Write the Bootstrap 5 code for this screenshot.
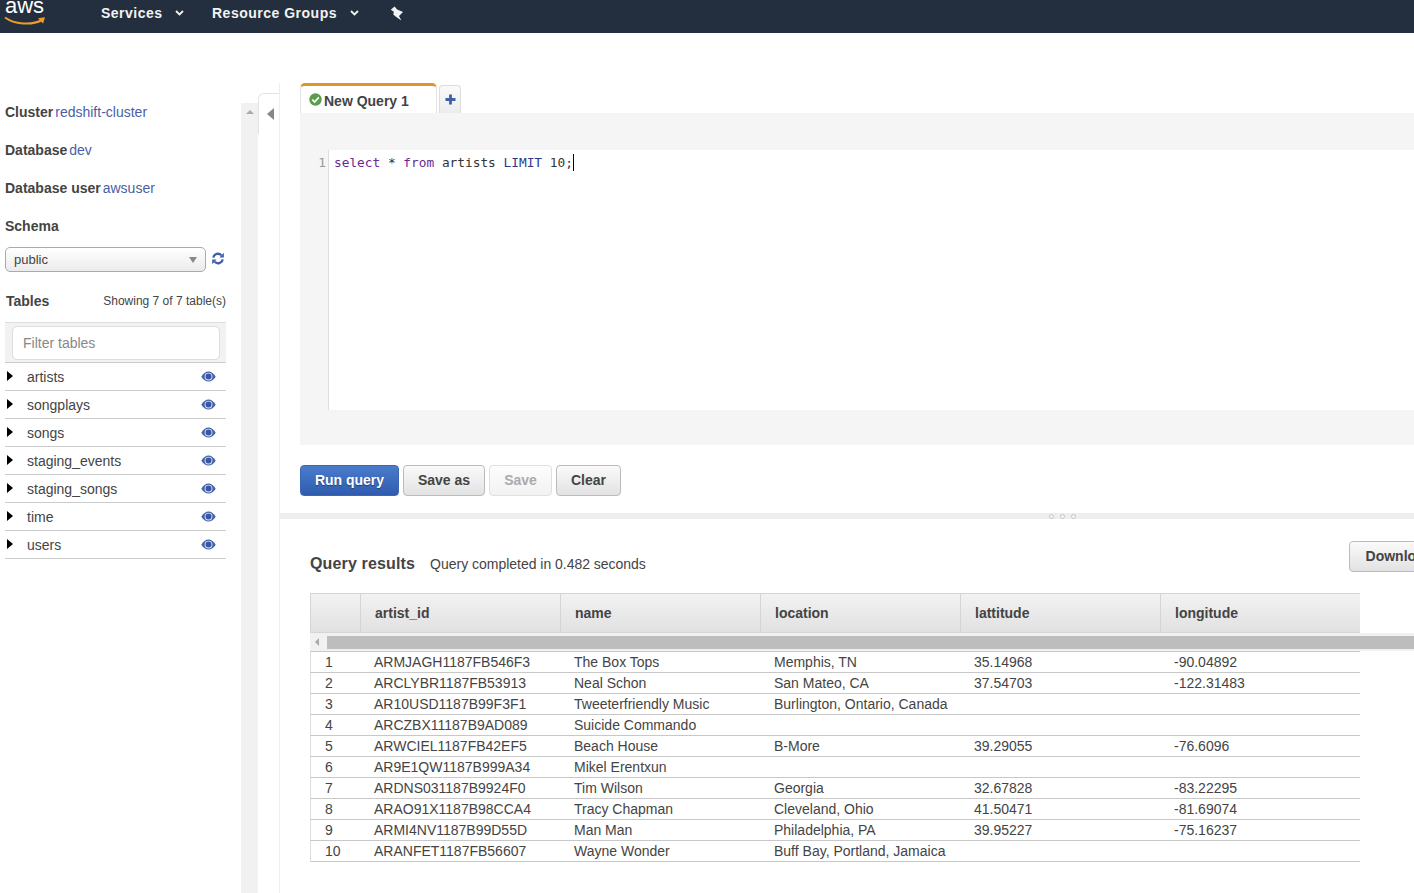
<!DOCTYPE html>
<html lang="en">
<head>
<meta charset="utf-8">
<title>Redshift Query Editor</title>
<link href="https://cdn.jsdelivr.net/npm/bootstrap@5.3.0/dist/css/bootstrap.min.css" rel="stylesheet">
<style>
html,body{height:100%;overflow:hidden}
body{font-family:"Liberation Sans",Arial,sans-serif;font-size:14px;color:#444;background:#fff}
.topbar{height:33px;background:#232f3e;color:#fff;padding:0;flex-wrap:nowrap;justify-content:flex-start;overflow:hidden}
.logo-box{width:101px;height:33px;position:relative;flex:none}
.logo-word{font-size:22px;line-height:22px;color:#fff;position:absolute;left:5px;top:-5px}
.logo-smile{position:absolute;left:4px;top:15px}
.top-item{font-weight:700;font-size:14px;letter-spacing:.5px;color:#f2f3f3;margin-top:-7px;display:flex;align-items:center}
.top-item svg{margin-left:13px}
.top-services{width:111px}
.top-services svg{margin-left:12px}
.top-groups{width:178px}
.top-item .pin-icon{margin:1px 0 0 0}
.shell{height:860px}
.side{width:241px;flex:none;padding:60px 15px 0 5px;position:relative}
.side-row{height:38px;line-height:38px;white-space:nowrap}
.side-row b{font-weight:700}
.side-link{color:#4a5fa5;text-decoration:none;margin-left:2px}
.schema-row{height:25px;margin-top:2px;width:221px}
.schema-select{width:201px;height:25px;border:1px solid #aaa;border-radius:5px;background:linear-gradient(#fff,#ebebeb);padding:0 8px;font-size:13px;color:#444;display:flex;align-items:center;justify-content:space-between;line-height:1}
.caret-down{width:0;height:0;border-left:4px solid transparent;border-right:4px solid transparent;border-top:6px solid #888}
.refresh{margin:-3px 2px 0 0}
.tables-head{height:38px;margin-top:10px;width:221px;line-height:38px}
.tables-head b{margin-left:1px}
.tables-head span{font-size:12px}
.filter-box{background:#f2f2f2;border-top:1px solid #ddd;border-bottom:1px solid #ccc;padding:3px 6px 2px 7px;width:221px;height:41px;margin-top:2px}
.filter-input.form-control{height:34px;border:1px solid #ddd;border-radius:5px;padding:0 10px;font-size:14px;color:#444;box-shadow:none}
.filter-input.form-control::placeholder{color:#888;opacity:1}
.tbl-list{width:221px;border-radius:0}
.tbl-item.list-group-item{height:28px;padding:1px 10px 0 2px;border:0;border-bottom:1px solid #ccc;color:#444;font-size:14px;display:flex;align-items:center;background:transparent}
.tri{width:0;height:0;border-top:5.5px solid transparent;border-bottom:5.5px solid transparent;border-left:6px solid #000;margin-right:14px;margin-top:-2px}
.eye{margin-top:-1px}
.scroll-track{width:17px;flex:none;background:#f1f1f1;margin-top:70px;position:relative}
.scroll-up{position:absolute;left:5px;top:7px;width:0;height:0;border-left:4px solid transparent;border-right:4px solid transparent;border-bottom:4px solid #aaa}
.toggler{width:22px;flex:none;border-right:1px solid #eee;margin-top:50px;padding-top:10px}
.toggle-tab{height:41px;border:1px solid #e3e3e3;border-right:0;border-bottom:0;border-top-left-radius:6px;display:flex;align-items:center;justify-content:center;padding-left:2px}
.toggle-tri{width:0;height:0;border-top:6px solid transparent;border-bottom:6px solid transparent;border-right:7px solid #888}
.main-col{flex:1 1 0;min-width:0;overflow:hidden}
.query-pane{padding:50px 0 0 20px;height:480px}
.tab-row{height:30px;align-items:flex-end}
.q-tab{width:137px;height:30px;border:1px solid #e3e3e3;border-top:3px solid #e0962b;border-bottom:0;border-radius:5px 5px 0 0;font-weight:700;display:flex;align-items:center;padding:3px 0 0 8px;color:#444;background:#fff}
.q-tab svg{margin:-3px 2px 0 0}
.q-add{width:22px;height:28px;margin-left:2px;border:1px solid #ddd;border-bottom:0;border-radius:4px 4px 0 0;background:linear-gradient(#fafafa,#ececec);display:flex;align-items:center;justify-content:center}
.editor-wrap{background:#f5f5f5;height:332px;padding:37px 0 35px}
.editor{display:flex;height:260px;background:#fff;margin-left:0}
.gutter{width:29px;background:#f5f5f5;border-right:1px solid #ddd;font-family:"DejaVu Sans Mono",monospace;font-size:12.8px;line-height:25px;color:#999;text-align:right;padding-right:2px;flex:none}
.code{font-family:"DejaVu Sans Mono",monospace;font-size:12.8px;line-height:25px;color:#333;padding-left:5px;white-space:pre}
.kw{color:#6b2a8f}
.kw2{color:#2b3a8f}
.cursor{display:inline-block;width:1px;height:17px;background:#000;vertical-align:-4px}
.actions{margin-top:20px;gap:4px}
.aws-btn.btn{height:31px;padding:0;border-radius:4px;font-size:14px;font-weight:700;color:#444;border:1px solid #bbb;background:linear-gradient(#fafafa,#e2e2e2);display:flex;align-items:center;justify-content:center}
.btn-run.btn{width:99px;color:#fff;border-color:#3a66b5;background:linear-gradient(#4a7ccc,#2f5cae);text-shadow:0 1px 1px rgba(0,0,0,.4)}
.btn-saveas.btn{width:82px}
.btn-save.btn{width:63px;opacity:1;color:#aaa;border-color:#e0e0e0;background:linear-gradient(#fdfdfd,#f2f2f2)}
.btn-clear.btn{width:65px}
.splitter{height:6px;background:#eee;display:flex;justify-content:flex-start;gap:6px;padding-left:769px}
.dot{width:5px;height:5px;border:1px solid #c4c4c4;border-radius:50%;margin-top:1px;background:#f6f6f6}
.results{padding:0 0 0 30px;width:1169px}
.res-head{height:74px;padding-top:22px}
.res-title{font-size:16px;font-weight:700;letter-spacing:.15px;margin-right:15px;line-height:46px}
.res-msg{font-size:14px;letter-spacing:-.02px}
.btn-dl.btn{width:100px;height:31px;flex:none}
.hdr-table.table,.data-table.table{table-layout:fixed;width:1050px;margin:0;color:#444;font-size:14px;border-collapse:separate;border-spacing:0}
.hdr-table.table>thead>tr>th{height:40px;padding:0 0 0 14px;vertical-align:middle;background:linear-gradient(#f2f2f2,#e1e1e1);border:0;border-top:1px solid #d5d5d5;border-bottom:1px solid #d5d5d5;border-left:1px solid #d5d5d5;font-weight:700;color:#444;box-shadow:none}
.h-scroll{width:1104px;height:18px;background:#f1f1f1;position:relative;display:flex;align-items:center;padding-left:17px}
.h-thumb{flex:1;height:13px;background:#bdbdbd}
.h-arrow{position:absolute;left:5px;top:5px;width:0;height:0;border-top:4px solid transparent;border-bottom:4px solid transparent;border-right:4px solid #aaa}
.data-table.table>tbody>tr>td{height:21px;padding:0 0 0 14px;line-height:20px;border:0;border-bottom:1px solid #c8c8c8;white-space:nowrap;overflow:visible;color:#444;box-shadow:none;background:transparent}
.data-table.table>tbody>tr>td:first-child{border-left:1px solid #ddd}
.data-table.table>tbody>tr:first-child>td{border-top:1px solid #c8c8c8;height:22px}
</style>
</head>
<body>
<nav class="navbar topbar d-flex align-items-center">
  <div class="logo-box">
    <span class="logo-word">aws</span>
    <svg class="logo-smile" width="43" height="12" viewBox="0 0 43 12"><path d="M1 2.500C10 9 27 11 38 5" fill="none" stroke="#ec9c2b" stroke-width="2"/><path d="M34 3.200 41 2.200 39 8.500Z" fill="#ec9c2b"/></svg>
  </div>
  <div class="top-item top-services">Services<svg width="9" height="6" viewBox="0 0 9 6"><path d="M1 1 4.500 4.500 8 1" fill="none" stroke="#f2f3f3" stroke-width="1.800"/></svg></div>
  <div class="top-item top-groups">Resource Groups<svg width="9" height="6" viewBox="0 0 9 6"><path d="M1 1 4.500 4.500 8 1" fill="none" stroke="#f2f3f3" stroke-width="1.800"/></svg></div>
  <div class="top-item"><svg class="pin-icon" width="14" height="15" viewBox="0 0 14 15"><path d="M.8 3.800 4.500.5 7.200 3.400 13 6 9 10 11.300 14.600 6 10.800 3.300 8.500 3.800 5.800Z" fill="#f2f3f3"/></svg></div>
</nav>

<div class="d-flex shell">
  <aside class="side">
    <div class="side-row"><b>Cluster</b><a class="side-link" href="#">redshift-cluster</a></div>
    <div class="side-row"><b>Database</b><a class="side-link" href="#">dev</a></div>
    <div class="side-row"><b>Database user</b><a class="side-link" href="#">awsuser</a></div>
    <div class="side-row"><b>Schema</b></div>
    <div class="schema-row d-flex align-items-center justify-content-between">
      <div class="schema-select"><span>public</span><i class="caret-down"></i></div>
      <svg class="refresh" width="12" height="13" viewBox="0 0 12 13"><path d="M1.300 5.600A4.700 4.700 0 0 1 9.300 3.200" fill="none" stroke="#3f5fa8" stroke-width="2.300"/><path d="M7.400 5.400 11.800 5.400 11.800 .8Z" fill="#3f5fa8"/><path d="M10.700 7.400A4.700 4.700 0 0 1 2.700 9.800" fill="none" stroke="#3f5fa8" stroke-width="2.300"/><path d="M4.600 7.600.2 7.600.2 12.200Z" fill="#3f5fa8"/></svg>
    </div>
    <div class="tables-head d-flex justify-content-between"><b>Tables</b><span>Showing 7 of 7 table(s)</span></div>
    <div class="filter-box"><input class="form-control filter-input" placeholder="Filter tables"></div>
    <ul class="list-group tbl-list">
      <li class="list-group-item tbl-item"><i class="tri"></i><span class="flex-grow-1">artists</span><svg class="eye" width="15" height="11" viewBox="0 0 15 11"><path d="M.3 5.800C2.200 2.500 4.700 .5 7.500 .5S12.800 2.500 14.700 5.800C12.800 8.800 10.300 10.500 7.500 10.500S2.200 8.800 .3 5.800Z" fill="#4463ad"/><circle cx="7.500" cy="5.600" r="3.900" fill="#dfe5f3"/><circle cx="7.500" cy="5.600" r="3" fill="#3a57a0"/></svg></li>
      <li class="list-group-item tbl-item"><i class="tri"></i><span class="flex-grow-1">songplays</span><svg class="eye" width="15" height="11" viewBox="0 0 15 11"><path d="M.3 5.800C2.200 2.500 4.700 .5 7.500 .5S12.800 2.500 14.700 5.800C12.800 8.800 10.300 10.500 7.500 10.500S2.200 8.800 .3 5.800Z" fill="#4463ad"/><circle cx="7.500" cy="5.600" r="3.900" fill="#dfe5f3"/><circle cx="7.500" cy="5.600" r="3" fill="#3a57a0"/></svg></li>
      <li class="list-group-item tbl-item"><i class="tri"></i><span class="flex-grow-1">songs</span><svg class="eye" width="15" height="11" viewBox="0 0 15 11"><path d="M.3 5.800C2.200 2.500 4.700 .5 7.500 .5S12.800 2.500 14.700 5.800C12.800 8.800 10.300 10.500 7.500 10.500S2.200 8.800 .3 5.800Z" fill="#4463ad"/><circle cx="7.500" cy="5.600" r="3.900" fill="#dfe5f3"/><circle cx="7.500" cy="5.600" r="3" fill="#3a57a0"/></svg></li>
      <li class="list-group-item tbl-item"><i class="tri"></i><span class="flex-grow-1">staging_events</span><svg class="eye" width="15" height="11" viewBox="0 0 15 11"><path d="M.3 5.800C2.200 2.500 4.700 .5 7.500 .5S12.800 2.500 14.700 5.800C12.800 8.800 10.300 10.500 7.500 10.500S2.200 8.800 .3 5.800Z" fill="#4463ad"/><circle cx="7.500" cy="5.600" r="3.900" fill="#dfe5f3"/><circle cx="7.500" cy="5.600" r="3" fill="#3a57a0"/></svg></li>
      <li class="list-group-item tbl-item"><i class="tri"></i><span class="flex-grow-1">staging_songs</span><svg class="eye" width="15" height="11" viewBox="0 0 15 11"><path d="M.3 5.800C2.200 2.500 4.700 .5 7.500 .5S12.800 2.500 14.700 5.800C12.800 8.800 10.300 10.500 7.500 10.500S2.200 8.800 .3 5.800Z" fill="#4463ad"/><circle cx="7.500" cy="5.600" r="3.900" fill="#dfe5f3"/><circle cx="7.500" cy="5.600" r="3" fill="#3a57a0"/></svg></li>
      <li class="list-group-item tbl-item"><i class="tri"></i><span class="flex-grow-1">time</span><svg class="eye" width="15" height="11" viewBox="0 0 15 11"><path d="M.3 5.800C2.200 2.500 4.700 .5 7.500 .5S12.800 2.500 14.700 5.800C12.800 8.800 10.300 10.500 7.500 10.500S2.200 8.800 .3 5.800Z" fill="#4463ad"/><circle cx="7.500" cy="5.600" r="3.900" fill="#dfe5f3"/><circle cx="7.500" cy="5.600" r="3" fill="#3a57a0"/></svg></li>
      <li class="list-group-item tbl-item"><i class="tri"></i><span class="flex-grow-1">users</span><svg class="eye" width="15" height="11" viewBox="0 0 15 11"><path d="M.3 5.800C2.200 2.500 4.700 .5 7.500 .5S12.800 2.500 14.700 5.800C12.800 8.800 10.300 10.500 7.500 10.500S2.200 8.800 .3 5.800Z" fill="#4463ad"/><circle cx="7.500" cy="5.600" r="3.900" fill="#dfe5f3"/><circle cx="7.500" cy="5.600" r="3" fill="#3a57a0"/></svg></li>
    </ul>
  </aside>
  <div class="scroll-track"><i class="scroll-up"></i></div>
  <div class="toggler"><div class="toggle-tab"><i class="toggle-tri"></i></div></div>

  <main class="main-col">
    <section class="query-pane">
      <div class="d-flex tab-row">
        <div class="q-tab"><svg width="13" height="13" viewBox="0 0 13 13"><circle cx="6.500" cy="6.500" r="6.200" fill="#5a9e4b"/><path d="M3.300 6.700 5.600 9 9.800 4.400" fill="none" stroke="#fff" stroke-width="1.800"/></svg>New Query 1</div>
        <div class="q-add"><svg width="11" height="11" viewBox="0 0 11 11"><path d="M5.500.5v10M.5 5.500h10" stroke="#3f5fa8" stroke-width="2.800"/></svg></div>
      </div>
      <div class="editor-wrap">
        <div class="editor">
          <div class="gutter">1</div>
          <div class="code"><span class="kw">select</span> * <span class="kw">from</span> artists <span class="kw2">LIMIT</span> 10;<span class="cursor"></span></div>
        </div>
      </div>
      <div class="d-flex actions">
        <button class="btn aws-btn btn-run" type="button">Run query</button>
        <button class="btn aws-btn btn-saveas" type="button">Save as</button>
        <button class="btn aws-btn btn-save" type="button" disabled>Save</button>
        <button class="btn aws-btn btn-clear" type="button">Clear</button>
      </div>
    </section>
    <div class="splitter"><i class="dot"></i><i class="dot"></i><i class="dot"></i></div>
    <section class="results">
      <div class="d-flex justify-content-between res-head">
        <div><span class="res-title">Query results</span><span class="res-msg">Query completed in 0.482 seconds</span></div>
        <button class="btn aws-btn btn-dl" type="button">Download</button>
      </div>
      <table class="table hdr-table">
        <colgroup><col style="width:50px"><col style="width:200px"><col style="width:200px"><col style="width:200px"><col style="width:200px"><col style="width:200px"></colgroup>
        <thead><tr><th></th><th>artist_id</th><th>name</th><th>location</th><th>lattitude</th><th>longitude</th></tr></thead>
      </table>
      <div class="h-scroll"><i class="h-arrow"></i><div class="h-thumb"></div></div>
      <table class="table data-table">
        <colgroup><col style="width:50px"><col style="width:200px"><col style="width:200px"><col style="width:200px"><col style="width:200px"><col style="width:200px"></colgroup>
        <tbody>
          <tr><td>1</td><td>ARMJAGH1187FB546F3</td><td>The Box Tops</td><td>Memphis, TN</td><td>35.14968</td><td>-90.04892</td></tr>
          <tr><td>2</td><td>ARCLYBR1187FB53913</td><td>Neal Schon</td><td>San Mateo, CA</td><td>37.54703</td><td>-122.31483</td></tr>
          <tr><td>3</td><td>AR10USD1187B99F3F1</td><td>Tweeterfriendly Music</td><td>Burlington, Ontario, Canada</td><td></td><td></td></tr>
          <tr><td>4</td><td>ARCZBX11187B9AD089</td><td>Suicide Commando</td><td></td><td></td><td></td></tr>
          <tr><td>5</td><td>ARWCIEL1187FB42EF5</td><td>Beach House</td><td>B-More</td><td>39.29055</td><td>-76.6096</td></tr>
          <tr><td>6</td><td>AR9E1QW1187B999A34</td><td>Mikel Erentxun</td><td></td><td></td><td></td></tr>
          <tr><td>7</td><td>ARDNS031187B9924F0</td><td>Tim Wilson</td><td>Georgia</td><td>32.67828</td><td>-83.22295</td></tr>
          <tr><td>8</td><td>ARAO91X1187B98CCA4</td><td>Tracy Chapman</td><td>Cleveland, Ohio</td><td>41.50471</td><td>-81.69074</td></tr>
          <tr><td>9</td><td>ARMI4NV1187B99D55D</td><td>Man Man</td><td>Philadelphia, PA</td><td>39.95227</td><td>-75.16237</td></tr>
          <tr><td>10</td><td>ARANFET1187FB56607</td><td>Wayne Wonder</td><td>Buff Bay, Portland, Jamaica</td><td></td><td></td></tr>
        </tbody>
      </table>
    </section>
  </main>
</div>
<script src="https://cdn.jsdelivr.net/npm/bootstrap@5.3.0/dist/js/bootstrap.bundle.min.js"></script>
</body>
</html>
